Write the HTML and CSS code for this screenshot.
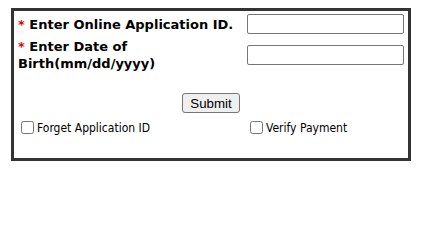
FILE: index.html
```html
<!DOCTYPE html>
<html lang="en">
<head>
    <meta charset="UTF-8">
    <title>Application Login</title>
    <link rel="stylesheet" href="styles.css">
</head>
<body>
    <form class="login-box">
        <div class="field-grid">
            <label class="field-label" for="appid"><span class="req">*</span> Enter Online Application ID.</label>
            <input class="field-input" type="text" id="appid">
            <label class="field-label" for="dob"><span class="req">*</span> Enter Date of Birth(mm/dd/yyyy)</label>
            <input class="field-input" type="text" id="dob">
        </div>
        <div class="submit-row">
            <button type="button" class="submit-btn">Submit</button>
        </div>
        <div class="field-grid options">
            <label class="opt"><input type="checkbox"> Forget Application ID</label>
            <label class="opt"><input type="checkbox"> Verify Payment</label>
        </div>
    </form>
</body>
</html>
```

FILE: styles.css
```css
body {
    margin: 8px;
    background: #fff;
    font-family: "DejaVu Sans", Verdana, sans-serif;
}
.login-box {
    margin: 0 0 0 3px;
    width: 386px;
    border: 3px solid #333;
    padding: 3px 4px 21px 4px;
}
.field-grid {
    display: grid;
    grid-template-columns: 229px 157px;
    row-gap: 4px;
    align-items: center;
}
.field-label {
    font-size: 13px;
    font-weight: bold;
    line-height: 17px;
    color: #000;
    padding-right: 52px;
}
.field-label:first-child {
    padding-right: 0;
    white-space: nowrap;
}
.req {
    color: #e00;
}
.field-input {
    box-sizing: border-box;
    width: 157px;
    height: 20px;
    margin: 0;
    border: 1px solid #767676;
    border-radius: 2px;
    padding: 1px 2px;
}
.submit-row {
    display: flex;
    justify-content: center;
    margin-top: 21px;
}
.submit-btn {
    box-sizing: border-box;
    height: 20px;
    width: 58px;
    padding: 0 6px;
    font-family: "Liberation Sans", Arial, sans-serif;
    font-size: 13.3px;
    color: #000;
    background: #efefef;
    border: 1px solid #767676;
    border-radius: 3px;
}
.options {
    margin-top: 5px;
    margin-left: -1px;
}
.opt {
    display: flex;
    align-items: center;
    font-family: "DejaVu Sans Condensed", Tahoma, sans-serif;
    font-size: 12px;
    color: #000;
}
.opt input {
    width: 13px;
    height: 13px;
    margin: 3px 3px 3px 4px;
}
```
